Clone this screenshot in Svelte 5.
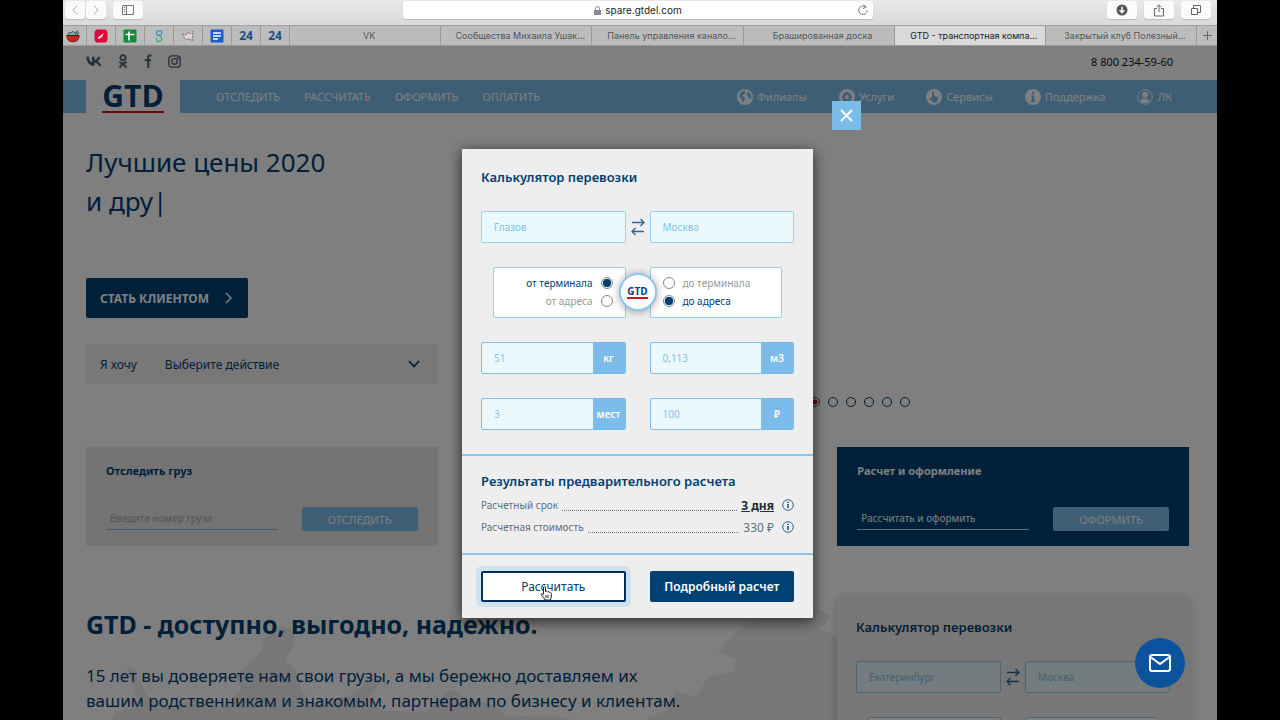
<script lang="ts">
    const pinned = ['bowl', 'red', 'sheet', 'link', 'bird', 'doc', '24', '24'];
    const tabs = [
        'VK',
        'Сообщества Михаила Ушак...',
        'Панель управления канало...',
        'Брашированная доска',
        'GTD - транспортная компа...',
        'Закрытый клуб Полезный...'
    ];
    const activeTab = 4;

    const mainLinks = ['ОТСЛЕДИТЬ', 'РАССЧИТАТЬ', 'ОФОРМИТЬ', 'ОПЛАТИТЬ'];
    const sideLinks = [
        { icon: 'globe', label: 'Филиалы' },
        { icon: 'gear', label: 'Услуги' },
        { icon: 'hand', label: 'Сервисы' },
        { icon: 'info', label: 'Поддержка' },
        { icon: 'user', label: 'ЛК' }
    ];

    let slide = $state(0);
    let modalOpen = $state(true);

    function closeModal() {
        modalOpen = false;
    }
</script>

{#snippet route(from: string, to: string)}
    <div class="route">
        <input class="field" value={from} aria-label="Откуда" />
        <button type="button" class="swap" aria-label="Поменять местами">
            <svg width="14" height="18" viewBox="0 0 14 18">
                <path d="M1 4.5H13M9.5 1L13 4.5L9.5 8M13 13.5H1M4.5 10L1 13.5L4.5 17" />
            </svg>
        </button>
        <input class="field" value={to} aria-label="Куда" />
    </div>
{/snippet}

{#snippet measure(value: string, unit: string)}
    <label class="measure">
        <input {value} />
        <span>{unit}</span>
    </label>
{/snippet}

{#snippet infoIcon()}
    <button type="button" class="hint" aria-label="Подсказка">
        <svg width="12" height="12" viewBox="0 0 12 12">
            <circle cx="6" cy="6" r="5.3" stroke="#2b6595" />
            <path d="M6 2.8v1.2M6 5v4" stroke="#004174" stroke-width="1.4" />
        </svg>
    </button>
{/snippet}

<div class="screen">
    <header class="browser">
        <div class="toolbar">
            <div class="tools left">
                <div class="pair">
                    <button aria-label="Назад">
                        <svg width="8" height="12" viewBox="0 0 8 12"><path d="M6 1.5L2 6l4 4.5" stroke="#aaa" /></svg>
                    </button>
                    <button aria-label="Вперёд">
                        <svg width="8" height="12" viewBox="0 0 8 12"><path d="M2 1.5L6 6l-4 4.5" stroke="#aaa" /></svg>
                    </button>
                </div>
                <button class="wide" aria-label="Боковое меню">
                    <svg width="12" height="10" viewBox="0 0 12 10"><path d="M.5.5h11v9H.5zM4.5.5v9M1.8 2.5h1.4M1.8 4.5h1.4M1.8 6.5h1.4" stroke="#777" /></svg>
                </button>
            </div>
            <div class="address">
                <svg width="7" height="9" viewBox="0 0 7 9"><path d="M0 4h7v5H0z" fill="#888" /><path d="M1.5 4V2.6a2 2 0 0 1 4 0V4" stroke="#888" /></svg>
                <span>spare.gtdel.com</span>
                <button class="reload" aria-label="Обновить">
                    <svg width="12" height="12" viewBox="0 0 12 12"><path d="M9 3.2A4.300 4.300 0 1 0 10.300 6.500M6.500.6L9.200 3.200L6 4.500" stroke="#777" /></svg>
                </button>
            </div>
            <div class="tools right">
                <button class="wide" aria-label="Загрузки">
                    <svg width="12" height="12" viewBox="0 0 12 12"><circle cx="6" cy="6" r="5.5" fill="#555" /><path d="M6 2.8v5.6M3.6 6.2L6 8.6l2.4-2.4" stroke="#fff" stroke-width="1.5" /></svg>
                </button>
                <button class="wide" aria-label="Поделиться">
                    <svg width="12" height="13" viewBox="0 0 12 13"><path d="M4 4.5H1.5v7.5h9V4.5H8M6 8V1M3.8 3L6 .9L8.2 3" stroke="#666" /></svg>
                </button>
                <button class="wide" aria-label="Вкладки">
                    <svg width="12" height="12" viewBox="0 0 12 12"><path d="M1.500 4.500h6v6h-6zM3.500 4.500v-3h7v7h-3" stroke="#666" /></svg>
                </button>
            </div>
        </div>
        <nav class="tabs">
            {#each pinned as pin}
                <button class="pin" aria-label={pin}>
                    {#if pin === '24'}
                        <b>24</b>
                    {:else}
                        <svg width="14" height="14" viewBox="0 0 14 14">
                            {#if pin === 'bowl'}
                                <path d="M2 6.500Q1.500 3 5 3.500Q7 1 9.500 4L12 6.500z" fill="#63b8b4" stroke="#234" stroke-width=".7" />
                                <path d="M.7 6.500h12.600Q13 12.800 7 12.800T.7 6.500z" fill="#c9281c" stroke="#400" stroke-width=".7" />
                                <path d="M9.500 4.500l2-3M11 5l2-1.500" stroke="#222" />
                            {:else if pin === 'red'}
                                <rect x=".5" y=".5" width="13" height="13" rx="3.5" fill="#e4003a" />
                                <path d="M3.800 10Q4 7.500 6 7L9.800 4L8 8Q6 9.500 3.800 10z" fill="#fff" />
                            {:else if pin === 'sheet'}
                                <rect x=".5" y=".5" width="13" height="13" rx="1" fill="#128a3a" />
                                <path d="M2.500 5.500h9M6 2.500v9" stroke="#fff" stroke-width="1.6" />
                            {:else if pin === 'link'}
                                <path d="M10 2.500Q6.500.5 4.800 2.800Q3.800 6 7 6.500Q10.500 6 9.500 3" stroke="#3e8fc0" stroke-width="1.3" />
                                <path d="M6.500 6.500Q10 7.500 9.800 10.500Q7.500 14 4.800 11.500Q4 10 4.800 9" stroke="#35b567" stroke-width="1.3" />
                            {:else if pin === 'bird'}
                                <path d="M1.500 5L5 6L6.500 3.500L9 5L12 2.500L11.500 8L12 12L9 10L5 10.500L3 8z" fill="#e6d5dc" stroke="#554" stroke-width=".8" stroke-dasharray="2 1" />
                            {:else}
                                <rect x=".5" y=".5" width="13" height="13" rx="1" fill="#1f5bd0" />
                                <path d="M3 4h8M3 7h8M3 10h5" stroke="#fff" stroke-width="1.5" />
                            {/if}
                        </svg>
                    {/if}
                </button>
            {/each}
            {#each tabs as tab, i}
                <button class="tab" class:active={i === activeTab}>{tab}</button>
            {/each}
            <button class="add" aria-label="Новая вкладка">
                <svg width="9" height="9" viewBox="0 0 9 9"><path d="M4.5 0v9M0 4.5h9" stroke="#666" /></svg>
            </button>
        </nav>
    </header>

    <div class="site">
        <div class="contacts">
            <div class="social">
                <a href="#vk" aria-label="ВКонтакте">
                    <svg width="16" height="11" viewBox="0 0 16 11"><path d="M8.7 10C3.500 10 .6 6.300.4.8H3C3.100 4.500 4.700 6.200 6.100 6.500V.8h2.400v3.400c1.500-.2 3-1.800 3.500-3.400h2.500c-.4 2-2 3.700-3.100 4.400C12.500 5.800 14.500 7.200 15.400 10h-2.700C12.100 8.300 10.600 6.900 8.500 6.700V10z" fill="#4a5f73" /></svg>
                </a>
                <a href="#ok" aria-label="Одноклассники">
                    <svg width="10" height="15" viewBox="0 0 10 15"><circle cx="5" cy="3.7" r="2.6" stroke-width="1.8" /><path d="M1.200 8Q5 10.500 8.800 8M5 9.300L1.600 13.600M5 9.300L8.400 13.600" stroke-width="2" /></svg>
                </a>
                <a href="#fb" aria-label="Facebook">
                    <svg width="8" height="14" viewBox="0 0 8 14"><path d="M7.500 1.500H6Q4.200 1.500 4.200 3.300V14M.8 6.200H7" stroke-width="2" /></svg>
                </a>
                <a href="#inst" aria-label="Instagram">
                    <svg width="13" height="13" viewBox="0 0 13 13"><rect x=".8" y=".8" width="11.400" height="11.400" rx="3" /><circle cx="6.500" cy="6.500" r="2.800" /><circle cx="9.900" cy="3.200" r=".4" /></svg>
                </a>
            </div>
            <a class="phone" href="tel:88002345960">8 800 234-59-60</a>
        </div>

        <nav class="menu">
            <a class="logo" href="#home"><b>GTD</b></a>
            <div class="main-links">
                {#each mainLinks as link}
                    <a href="#menu">{link}</a>
                {/each}
            </div>
            <div class="side-links">
                {#each sideLinks as link}
                    <a href="#menu">
                        <svg width="16" height="16" viewBox="0 0 16 16">
                            {#if link.icon === 'user'}
                                <circle cx="8" cy="8" r="7.3" stroke="#fff" />
                                <circle cx="8" cy="5.8" r="3" fill="#fff" />
                                <path d="M3 12.500Q4 9 8 9.500T13 12.500Q8 16 3 12.500z" fill="#fff" />
                            {:else}
                                <circle cx="8" cy="8" r="8" fill="#fff" />
                                {#if link.icon === 'globe'}
                                    <path d="M3.500 3.500L7 1.500L8.500 3L7 5.500L5 6.500L8 8.500L7.500 11L5.500 13.500L4.500 9.500L2 7.500zM11 2.500L14 5.500L14.500 9L12.500 10.500L11 7.500L9.500 5z" fill="#7bbcea" />
                                {:else if link.icon === 'gear'}
                                    <circle cx="8" cy="8" r="3.2" stroke="#7bbcea" stroke-width="2.4" />
                                    <path d="M8 3v2M8 11v2M3 8h2M11 8h2M4.500 4.500l1.500 1.500M10 10l1.500 1.500M4.500 11.500L6 10M10 6l1.500-1.500" stroke="#7bbcea" stroke-width="2" />
                                {:else if link.icon === 'hand'}
                                    <path d="M6 2.500h2V7l4 1v3l-1.500 2.500H7L3.500 9.500L5 8.500L6 9z" fill="#7bbcea" />
                                {:else}
                                    <path d="M8 3v2M6.500 7H8v5M6 12h4" stroke="#7bbcea" stroke-width="2" />
                                {/if}
                            {/if}
                        </svg>
                        {link.label}
                    </a>
                {/each}
            </div>
        </nav>

        <main>
            <section class="hero">
                <h1>Лучшие цены 2020<br />и дру|</h1>
                <button class="client">
                    СТАТЬ КЛИЕНТОМ
                    <svg width="7" height="12" viewBox="0 0 7 12"><path d="M1 1l5 5l-5 5" stroke="#fff" stroke-width="1.5" /></svg>
                </button>
                <div class="wish">
                    <label for="wish">Я хочу</label>
                    <select id="wish">
                        <option>Выберите действие</option>
                    </select>
                    <svg width="12" height="8" viewBox="0 0 12 8"><path d="M1 1l5 5.500L11 1" stroke="#004174" stroke-width="1.8" /></svg>
                </div>
                <div class="dots">
                    {#each Array(6) as _, i}
                        <button class:current={slide === i} aria-label="Слайд {i + 1}" onclick={() => (slide = i)}></button>
                    {/each}
                </div>
            </section>

            <section class="cards">
                <form class="card track">
                    <h3>Отследить груз</h3>
                    <div class="line">
                        <input placeholder="Введите номер груза" aria-label="Номер груза" />
                        <button type="button">ОТСЛЕДИТЬ</button>
                    </div>
                </form>
                <form class="card order">
                    <h3>Расчет и оформление</h3>
                    <div class="line">
                        <input value="Рассчитать и оформить" aria-label="Действие" />
                        <button type="button">ОФОРМИТЬ</button>
                    </div>
                </form>
            </section>

            <section class="about">
                <svg class="map" viewBox="0 0 760 130" preserveAspectRatio="xMinYMin slice">
                    <path d="M20 130L30 112L55 108L40 68L48 70L60 96L80 108L110 100L135 110L155 90L150 76L168 60L178 48Q172 42 182 38Q188 26 198 28Q212 32 208 44L200 62Q214 72 214 88L225 104L265 96L280 84L296 82L278 104L300 112L340 112L365 90L380 100L410 106L420 118L460 116L540 130z" />
                    <path d="M560 130L562 118L580 112L590 92L610 98L622 78L648 72L650 60L632 52L660 24L690 16L720 6L745 16L735 30L760 40V4V130z" />
                </svg>
                <div class="about-text">
                    <h2>GTD - доступно, выгодно, надежно.</h2>
                    <p>15 лет вы доверяете нам свои грузы, а мы бережно доставляем их<br />вашим родственникам и знакомым, партнерам по бизнесу и клиентам.</p>
                </div>
                <form class="calculator side-calc">
                    <h3>Калькулятор перевозки</h3>
                    {@render route('Екатеринбург', 'Москва')}
                    <div class="options">
                        <div class="option-box"></div>
                        <div class="option-box"></div>
                    </div>
                </form>
            </section>
        </main>

        {#if modalOpen}
            <div class="overlay">
                <form class="calculator modal">
                    <button type="button" class="close" aria-label="Закрыть" onclick={closeModal}>
                        <svg width="13" height="13" viewBox="0 0 13 13"><path d="M1 1l11 11M12 1L1 12" stroke="#fff" stroke-width="2" /></svg>
                    </button>
                    <h3>Калькулятор перевозки</h3>
                    {@render route('Глазов', 'Москва')}
                    <div class="options">
                        <div class="option-box from">
                            <label>от терминала <input type="radio" name="from" checked /></label>
                            <label>от адреса <input type="radio" name="from" /></label>
                        </div>
                        <div class="option-box to">
                            <label><input type="radio" name="to" /> до терминала</label>
                            <label><input type="radio" name="to" checked /> до адреса</label>
                        </div>
                        <span class="badge"><b>GTD</b></span>
                    </div>
                    <div class="measures">
                        {@render measure('51', 'кг')}
                        {@render measure('0,113', 'м3')}
                        {@render measure('3', 'мест')}
                        {@render measure('100', '₽')}
                    </div>
                    <div class="results">
                        <h3>Результаты предварительного расчета</h3>
                        <div class="result">
                            <span>Расчетный срок</span>
                            <i></i>
                            <strong>3 дня</strong>
                            {@render infoIcon()}
                        </div>
                        <div class="result">
                            <span>Расчетная стоимость</span>
                            <i></i>
                            <em>330 ₽</em>
                            {@render infoIcon()}
                        </div>
                    </div>
                    <div class="actions">
                        <button type="button" class="count">
                            Рассчитать
                            <svg class="pointer" width="13" height="16" viewBox="0 0 13 16"><path d="M3.500 9V2Q4.500.3 5.500 2V6.500Q6.500 5.500 7.300 6.800Q8.500 6 9.200 7.300Q11 6.700 11.300 8.500V12L10.300 15H5L3.800 12.800L1 9.500Q1.500 7.800 3.500 9.800M6 10v3M8 10v3" /></svg>
                        </button>
                        <button type="button" class="detail">Подробный расчет</button>
                    </div>
                </form>
            </div>
        {/if}

        <button class="mail" aria-label="Написать нам">
            <svg width="22" height="18" viewBox="0 0 22 18"><rect x="1" y="1" width="20" height="16" rx="2" /><path d="M1.500 3L11 10l9.500-7" /></svg>
        </button>
    </div>
</div>

<style>
    :global(body) {
        background: #000;
    }

    .screen {
        display: flex;
        flex-direction: column;
        height: 100vh;
        padding: 0 63px;
        overflow: hidden;
        box-sizing: border-box;
        font-family: "Noto Sans", "Open Sans", sans-serif;
        color: #004174;
    }

    .screen * {
        box-sizing: border-box;
    }

    svg {
        fill: none;
        flex-shrink: 0;
    }

    button,
    input,
    select {
        margin: 0;
        padding: 0;
        border: none;
        outline: none;
        background: none;
        color: inherit;
        font: inherit;
    }

    button {
        display: flex;
        align-items: center;
        justify-content: center;
        cursor: pointer;
    }

    a {
        color: inherit;
        text-decoration: none;
    }

    h1,
    h2,
    h3,
    p {
        margin: 0;
    }

    /* browser window */
    .browser {
        flex-shrink: 0;
        font-family: Inter, Roboto, sans-serif;
        font-size: 9px;
        color: #555;
    }

    .toolbar {
        display: flex;
        justify-content: space-between;
        height: 25px;
        padding: 1px 6px 0 2px;
        background: linear-gradient(#e9e9e9, #dadada);
    }

    .tools {
        display: flex;
        flex: 1;
        gap: 7px;
    }

    .tools.right {
        justify-content: flex-end;
    }

    .pair {
        display: flex;
        gap: 1px;
    }

    .tools button {
        width: 20px;
        height: 18px;
        border-radius: 3px;
        background: #fbfbfb;
        box-shadow: 0 1px 1px #bbb;
    }

    .tools .wide {
        width: 30px;
    }

    .address {
        display: flex;
        align-items: center;
        justify-content: center;
        gap: 4px;
        width: 41%;
        height: 18px;
        border-radius: 3px;
        background: #fff;
        box-shadow: 0 1px 1px #bbb;
        color: #222;
        font-size: 10px;
        position: relative;
    }

    .reload {
        position: absolute;
        right: 4px;
        top: 3px;
    }

    .tabs {
        display: flex;
        height: 21px;
        border-top: 1px solid #a0a0a0;
        border-bottom: 1px solid #999;
        background: #bcbcbc;
    }

    .pin {
        width: 29px;
        border-right: 1px solid #999;
    }

    .pin:first-child {
        width: 24px;
        padding-right: 4px;
    }

    .pin b {
        font: bold 12px "Noto Sans", sans-serif;
        color: #1d4f86;
    }

    .tab {
        flex: 1;
        min-width: 0;
        border-right: 1px solid #999;
        padding-left: 8px;
        white-space: nowrap;
    }

    .tab.active {
        background: #d9d9d9;
        color: #222;
    }

    .add {
        width: 20px;
    }

    /* site */
    .site {
        flex: 1;
        min-height: 0;
        background: #fff;
        position: relative;
        overflow: hidden;
    }

    .contacts {
        display: flex;
        align-items: center;
        justify-content: space-between;
        height: 34px;
        padding: 0 44px 4px 23px;
        font-size: 11px;
        color: #111;
    }

    .social {
        display: flex;
        align-items: center;
        gap: 16px;
    }

    .social a {
        display: flex;
    }

    .social svg {
        stroke: #4a5f73;
        stroke-width: 1.3;
    }

    .social a:first-child svg {
        stroke: none;
    }

    .menu {
        display: flex;
        align-items: center;
        height: 33px;
        padding: 0 45px 0 23px;
        background: #7bbcea;
        color: #fff;
        font-size: 11px;
    }

    .logo {
        display: flex;
        justify-content: center;
        width: 94px;
        height: 33px;
        background: #fff;
        color: #004174;
    }

    .logo b {
        height: 33px;
        border-bottom: 2px solid #d5101c;
        font: bold 30px/32px "Open Sans", sans-serif;
    }

    .main-links {
        display: flex;
        flex: 1;
        gap: 24px;
        padding-left: 36px;
    }

    .side-links {
        display: flex;
        gap: 32px;
    }

    .side-links a {
        display: flex;
        align-items: center;
        gap: 4px;
    }

    main {
        padding: 0 28px 0 23px;
    }

    .hero {
        display: flex;
        flex-direction: column;
        align-items: flex-start;
        padding-top: 30px;
    }

    h1 {
        height: 135px;
        font-size: 26px;
        line-height: 39px;
        font-weight: 400;
    }

    .client {
        gap: 16px;
        height: 40px;
        padding: 0 16px 0 14px;
        border-radius: 2px;
        background: #004174;
        color: #fff;
        font-size: 12px;
        font-weight: 700;
    }

    .wish {
        display: flex;
        align-items: center;
        width: 352px;
        height: 40px;
        margin-top: 26px;
        padding: 0 18px 0 14px;
        background: #f0f0f0;
        font-size: 12px;
    }

    .wish select {
        flex: 1;
        margin-left: 28px;
        appearance: none;
    }

    .dots {
        display: flex;
        gap: 8px;
        align-self: flex-end;
        margin: 13px 279px 0 0;
    }

    .dots button {
        width: 10px;
        height: 10px;
        border: 1px solid #004174;
        border-radius: 50%;
    }

    .dots .current {
        border-color: #555;
        background: radial-gradient(#d5101c 40%, transparent 50%);
    }

    .cards {
        display: grid;
        grid-template-columns: 1fr 1fr 1fr;
        gap: 24px;
        margin-top: 40px;
    }

    .card {
        height: 99px;
        padding: 14px 20px;
        background: #e8e8e8;
    }

    .card h3 {
        font-size: 11px;
        line-height: 20px;
    }

    .card.order {
        grid-column: 3;
        background: #004174;
        color: #fff;
    }

    .line {
        display: flex;
        justify-content: space-between;
        margin-top: 26px;
        gap: 24px;
        font-size: 10px;
    }

    .line input {
        flex: 1;
        min-width: 0;
        height: 23px;
        padding: 0 4px;
        border-bottom: 1px solid #7bbcea;
    }

    .line input::placeholder {
        color: #aaa;
    }

    .order .line input {
        border-color: #b6dcf5;
    }

    .line button {
        width: 116px;
        height: 24px;
        border-radius: 2px;
        background: #7bbcea;
        color: #fff;
        font-size: 11px;
    }

    .about {
        display: flex;
        justify-content: space-between;
        margin-top: 53px;
        position: relative;
    }

    .about-text {
        padding-top: 5px;
        white-space: nowrap;
        position: relative;
    }

    .map {
        width: 760px;
        height: 130px;
        position: absolute;
        left: 0;
        top: 0;
        fill: #efefef;
    }

    h2 {
        font-size: 25px;
        line-height: 40px;
    }

    p {
        margin-top: 19px;
        font-size: 17px;
        line-height: 25px;
    }

    /* calculator */
    .calculator {
        width: 351px;
        padding: 17px 19px 0;
        background: #eee;
    }

    .calculator h3 {
        font-size: 13px;
        line-height: 22px;
        font-weight: 600;
    }

    .side-calc {
        width: 352px;
        height: 400px;
        box-shadow: 0 0 10px rgba(0, 0, 0, .2);
        position: relative;
    }

    .route {
        display: flex;
        margin-top: 23px;
    }

    .field {
        flex: 1;
        min-width: 0;
        height: 32px;
        padding: 0 12px;
        border: 1px solid #9bcdea;
        border-radius: 2px;
        background: #ebf9ff;
        color: #88bfe5;
        font-size: 10px;
    }

    .swap {
        width: 24px;
    }

    .swap svg {
        stroke: #2b6595;
        stroke-width: 1.3;
    }

    .options {
        display: flex;
        justify-content: space-between;
        gap: 24px;
        margin-top: 24px;
        padding: 0 12px;
        position: relative;
    }

    .option-box {
        display: flex;
        flex: 1;
        flex-direction: column;
        justify-content: center;
        height: 51px;
        padding: 0 12px 2px;
        border: 1px solid #9bcdea;
        border-radius: 2px;
        background: #fff;
        color: #999;
        font-size: 10px;
    }

    .option-box label {
        display: flex;
        align-items: center;
        gap: 8px;
        height: 18px;
    }

    .option-box label:has(input:checked) {
        color: #004174;
    }

    .from label {
        justify-content: flex-end;
    }

    .option-box input {
        width: 12px;
        height: 12px;
        border: 1px solid #888;
        border-radius: 50%;
        appearance: none;
    }

    .option-box input:checked {
        background: radial-gradient(#004174 55%, #fff 65%);
    }

    .badge {
        display: flex;
        align-items: center;
        justify-content: center;
        width: 38px;
        height: 38px;
        border: 2px solid #8fc6ec;
        border-radius: 50%;
        background: #fff;
        box-shadow: 0 1px 8px rgba(0, 0, 0, .35);
        position: absolute;
        left: calc(50% - 19px);
        top: 6px;
    }

    .badge b {
        border-bottom: 2px solid #d5101c;
        font: bold 10px/12px "Open Sans", sans-serif;
    }

    .overlay {
        display: flex;
        justify-content: center;
        align-items: flex-start;
        padding: 103px 5px 0 0;
        background: rgba(0, 0, 0, .5);
        position: absolute;
        inset: 0;
    }

    .modal {
        box-shadow: 0 3px 14px rgba(0, 0, 0, .7);
        border-radius: 1px;
        position: relative;
    }

    .close {
        width: 29px;
        height: 29px;
        background: #7bbcea;
        position: absolute;
        right: -48px;
        top: -48px;
    }

    .measures {
        display: grid;
        grid-template-columns: minmax(0, 1fr) minmax(0, 1fr);
        gap: 24px;
        margin: 24px 0;
        font-size: 10px;
    }

    .measure {
        display: flex;
        height: 32px;
        border: 1px solid #7bbcea;
        border-radius: 2px;
        background: #ebf9ff;
    }

    .measure input {
        flex: 1;
        min-width: 0;
        padding: 0 12px;
        color: #88bfe5;
    }

    .measure span {
        display: flex;
        align-items: center;
        justify-content: center;
        width: 32px;
        background: #7bbcea;
        color: #fff;
        font-weight: 600;
    }

    .results {
        margin: 0 -19px;
        padding: 14px 19px 15px;
        border-top: 2px solid #8cc4e8;
        border-bottom: 2px solid #8cc4e8;
    }

    .results h3 {
        margin-bottom: 2px;
    }

    .result {
        display: flex;
        align-items: center;
        height: 22px;
        color: #5e6f7e;
        font-size: 10px;
    }

    .result i {
        flex: 1;
        height: 12px;
        margin: 0 4px;
        border-bottom: 1px dotted #607d94;
    }

    .result strong {
        color: #222f3b;
        font-size: 12px;
        text-decoration: underline;
    }

    .result em {
        font-size: 12px;
        font-style: normal;
    }

    .hint {
        margin-left: 8px;
    }

    .actions {
        display: grid;
        grid-template-columns: 1fr 1fr;
        gap: 24px;
        padding: 16px 0;
        font-size: 12px;
    }

    .count {
        height: 31px;
        border: 2px solid #00305c;
        border-radius: 2px;
        background: #fff;
        box-shadow: 0 0 0 5px #cfe2f0;
        position: relative;
    }

    .pointer {
        position: absolute;
        left: 57px;
        top: 12px;
        fill: #fff;
        stroke: #222;
    }

    .detail {
        height: 31px;
        border-radius: 2px;
        background: #004174;
        color: #fff;
        font-weight: 600;
    }

    .mail {
        width: 50px;
        height: 50px;
        border-radius: 50%;
        background: #0c529c;
        position: absolute;
        right: 32px;
        bottom: 32px;
    }

    .mail svg {
        stroke: #fff;
        stroke-width: 2;
    }
</style>
